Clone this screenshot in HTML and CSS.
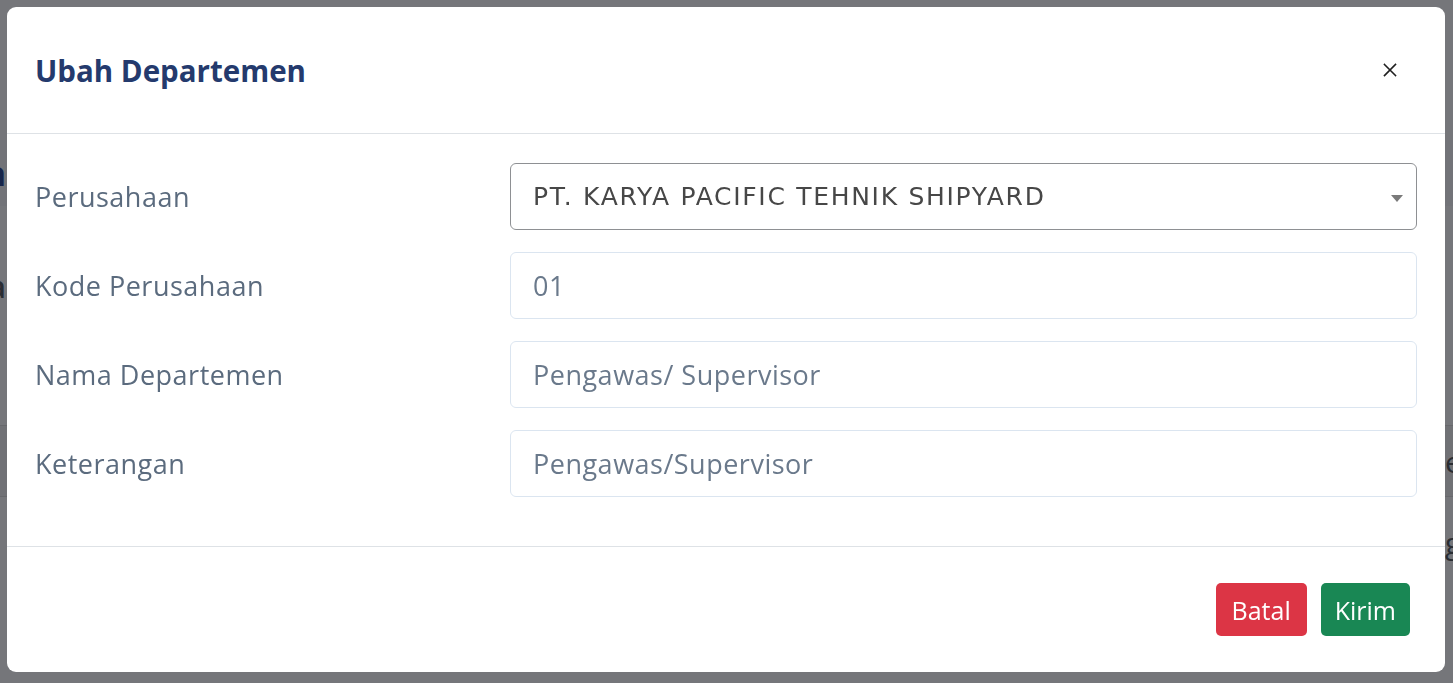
FILE: index.html
```html
<!DOCTYPE html>
<html lang="id">
<head>
<meta charset="utf-8">
<title>Ubah Departemen</title>
<link rel="stylesheet" href="styles.css">
</head>
<body>
<div class="behind">
  <div class="b-row b-top"></div>
  <div class="b-row b-head"><div class="b-left"><span class="b-title">Departemen</span></div></div>
  <div class="b-row b-sub"><div class="b-left"><span class="b-subtext">Data</span></div></div>
  <div class="b-row b-table-top"></div>
  <div class="b-row b-cell"><div class="b-left"></div><div class="b-right"><span class="b-celltext">e</span></div></div>
  <div class="b-row b-cell2"><div class="b-left"></div><div class="b-right"><span class="b-celltext">g</span></div></div>
</div>

<div class="modal-wrap">
  <div class="modal">
    <div class="modal-header">
      <h5 class="modal-title">Ubah Departemen</h5>
      <button class="close" type="button" aria-label="Close">
        <svg width="14" height="14" viewBox="0 0 14 14"><path d="M1.5 1.5 L12.5 12.5 M12.5 1.5 L1.5 12.5" stroke="#1f1f1f" stroke-width="1.6" stroke-linecap="square"/></svg>
      </button>
    </div>
    <div class="modal-body">
      <div class="form-row">
        <label class="form-label">Perusahaan</label>
        <div class="select">
          <span class="select-text">PT. KARYA PACIFIC TEHNIK SHIPYARD</span>
          <span class="caret"></span>
        </div>
      </div>
      <div class="form-row">
        <label class="form-label">Kode Perusahaan</label>
        <div class="input">01</div>
      </div>
      <div class="form-row">
        <label class="form-label">Nama Departemen</label>
        <div class="input">Pengawas/ Supervisor</div>
      </div>
      <div class="form-row">
        <label class="form-label">Keterangan</label>
        <div class="input">Pengawas/Supervisor</div>
      </div>
    </div>
    <div class="modal-footer">
      <button class="btn btn-danger" type="button">Batal</button>
      <button class="btn btn-success" type="button">Kirim</button>
    </div>
  </div>
</div>
</body>
</html>
```
FILE: styles.css
```css
* { box-sizing: border-box; }
html, body { margin: 0; padding: 0; }
body {
  width: 1453px;
  height: 683px;
  overflow: hidden;
  background: #75767a;
  font-family: "Open Sans", "Noto Sans", sans-serif;
}

/* underlying page, dimmed */
.behind { display: flex; flex-direction: column; }
.b-row { display: flex; justify-content: space-between; }
.b-left { width: 6px; display: flex; justify-content: flex-end; overflow: visible; }
.b-right { width: 8px; display: flex; justify-content: flex-start; overflow: hidden; }
.b-top { height: 140px; }
.b-head { height: 66px; background: #727378; align-items: center; }
.b-title { font-weight: 700; font-size: 34px; color: #16244a; white-space: nowrap; }
.b-sub { height: 160px; align-items: center; }
.b-subtext { font-size: 30px; color: #2a2d33; white-space: nowrap; font-weight: 600; }
.b-table-top { height: 60px; border-bottom: 1px solid #67686c; }
.b-cell { height: 71px; border-bottom: 1px solid #67686c; background: #707175; align-items: center; }
.b-cell2 { height: 90px; align-items: center; }
.b-celltext { font-size: 30px; color: #2a2d33; white-space: nowrap; }

/* modal */
.modal-wrap {
  position: fixed;
  inset: 0;
  padding: 7px 8px 11px 7px;
}
.modal {
  background: #fff;
  border-radius: 9px;
  height: 665px;
  display: flex;
  flex-direction: column;
}
.modal-header {
  height: 127px;
  border-bottom: 1px solid #dee2e6;
  display: flex;
  align-items: center;
  justify-content: space-between;
  padding: 0 48px 0 28px;
}
.modal-title {
  margin: 0;
  font-size: 29.5px;
  font-weight: 700;
  color: #243a6d;
}
.close {
  border: 0;
  background: transparent;
  padding: 0;
  width: 14px;
  height: 14px;
  display: flex;
}

.modal-body {
  padding: 29px 28px 49px 28px;
  border-bottom: 1px solid #dee2e6;
  display: flex;
  flex-direction: column;
  gap: 22px;
}
.form-row {
  display: grid;
  grid-template-columns: 475px 1fr;
  align-items: center;
  height: 67px;
}
.form-label {
  font-size: 27px;
  letter-spacing: 0.5px;
  color: #5b6b7e;
}
.select, .input {
  height: 67px;
  border-radius: 6px;
  display: flex;
  align-items: center;
  padding: 0 22px;
}
.select {
  border: 1px solid #8e9093;
  justify-content: space-between;
  padding-right: 13px;
}
.select-text {
  font-family: "DejaVu Sans", Verdana, sans-serif;
  font-size: 25px;
  letter-spacing: 1.7px;
  color: #474747;
}
.caret {
  width: 0; height: 0;
  border-left: 6px solid transparent;
  border-right: 6px solid transparent;
  border-top: 7px solid #7a7a7a;
  margin-top: 4px;
}
.input {
  border: 1px solid #dbe5f0;
  color: #6a798b;
  font-size: 27px;
  letter-spacing: 0.5px;
}

.modal-footer {
  flex: 1;
  display: flex;
  align-items: center;
  justify-content: flex-end;
  gap: 14px;
  padding: 0 35px;
}
.btn {
  height: 53px;
  border: 0;
  border-radius: 5px;
  color: #fff;
  font-family: "Open Sans", "Noto Sans", sans-serif;
  font-size: 25px;
  padding: 0 14px;
}
.btn-danger { background: #dc3545; padding: 0 16px; }
.btn-success { background: #198754; padding: 0 14px; }
```
